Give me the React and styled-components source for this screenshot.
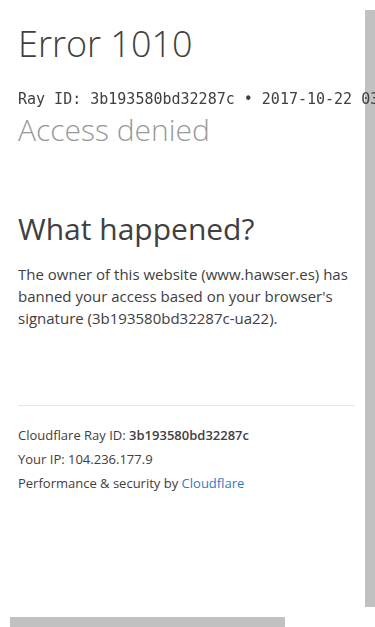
import styled, { createGlobalStyle } from "styled-components";

const GlobalStyle = createGlobalStyle`
  html, body {
    margin: 0;
    padding: 0;
    background: #fff;
  }
  body {
    font-family: "Open Sans", "Liberation Sans", sans-serif;
    color: #404040;
  }
`;

const Page = styled.div`
  padding: 22px 20px 40px 18px;
`;

const Header = styled.header`
  display: flex;
  flex-direction: column;
`;

const Title = styled.h1`
  margin: 0;
  font-size: 36px;
  line-height: 43px;
  font-weight: 300;
  color: #404040;
`;

// sits above the scrollbar thumb, like in the capture
const RayLine = styled.div`
  position: relative;
  z-index: 2;
  margin-top: 24px;
  font-family: "DejaVu Sans Mono", monospace;
  font-size: 15px;
  line-height: 20px;
  white-space: nowrap;
  color: #404040;
`;

const SubTitle = styled.h2`
  margin: 3px 0 0;
  font-size: 30px;
  line-height: 36px;
  font-weight: 300;
  color: #999;
`;

const Section = styled.section`
  margin-top: 63px;
`;

const SectionTitle = styled.h2`
  margin: 0;
  font-size: 30px;
  line-height: 36px;
  font-weight: 400;
  color: #404040;
`;

const Text = styled.p`
  margin: 16px 0 0;
  font-size: 15px;
  line-height: 22px;
  color: #404040;
`;

const Footer = styled.footer`
  margin-top: 76px;
  border-top: 1px solid #e6e6e6;
  padding-top: 17px;
  font-size: 13px;
  line-height: 24px;
  color: #404040;
`;

const Strong = styled.strong`
  font-weight: 600;
`;

const Link = styled.a`
  color: #2f7bbf;
  text-decoration: none;
`;

// scrollbar thumbs from the capture
const Thumb = styled.div`
  position: fixed;
  z-index: 1;
  background: #c1c1c1;
  pointer-events: none;
  ${(p) =>
    p.$vertical
      ? "top: 10px; right: 0; width: 10px; height: 597px;"
      : "bottom: 0; left: 10px; width: 275px; height: 10px;"}
`;

export default function App() {
  return (
    <>
      <GlobalStyle />
      <Page>
        <Header>
          <Title>Error 1010</Title>
          <RayLine>Ray ID: 3b193580bd32287c &bull; 2017-10-22 03:43:18 UTC</RayLine>
          <SubTitle>Access denied</SubTitle>
        </Header>
        <Section>
          <SectionTitle>What happened?</SectionTitle>
          <Text>
            The owner of this website (www.hawser.es) has banned your access
            based on your browser's signature (3b193580bd32287c-ua22).
          </Text>
        </Section>
        <Footer>
          <div>
            Cloudflare Ray ID: <Strong>3b193580bd32287c</Strong>
          </div>
          <div>Your IP: 104.236.177.9</div>
          <div>
            Performance &amp; security by <Link href="#">Cloudflare</Link>
          </div>
        </Footer>
      </Page>
      <Thumb $vertical aria-hidden="true" />
      <Thumb aria-hidden="true" />
    </>
  );
}
